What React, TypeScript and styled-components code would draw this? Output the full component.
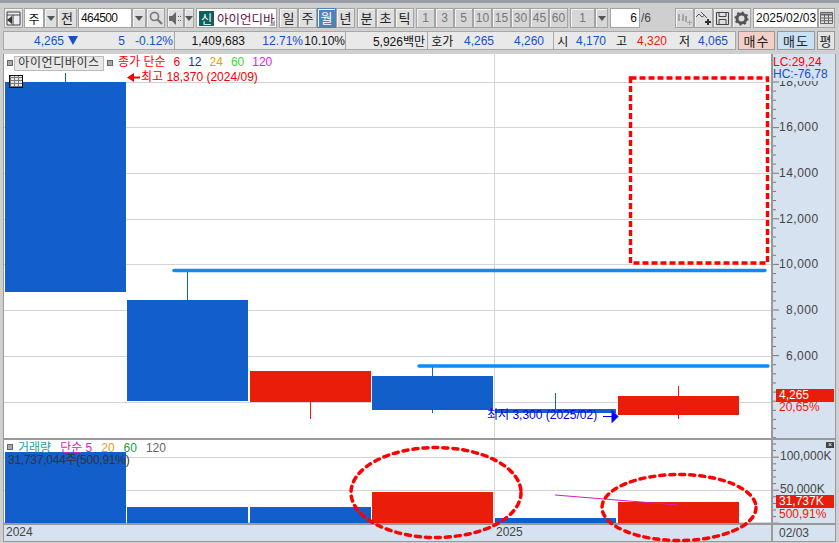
import React from "react";
import styled, { createGlobalStyle } from "styled-components";

const Global = createGlobalStyle`
  html, body { margin: 0; padding: 0; background: #cfcfcf; overflow: hidden; }
  body { font-family: "Liberation Sans", "Noto Sans CJK KR", sans-serif; font-size: 12px; }
  * { box-sizing: border-box; }
`;
const Page = styled.div`
  width: 839px; height: 543px; display: flex; flex-direction: column; background: #cfcfcf;
  border-top: 3px solid #9a9ca3; overflow: hidden;
`;
const Toolbar = styled.div`
  display: flex; align-items: stretch; height: 20px; margin: 5px 0 0 4px;
`;
const Btn = styled.div<{ $w: number; $active?: boolean; $ml?: number; $dim?: boolean }>`
  width: ${(p) => p.$w}px; margin-left: ${(p) => p.$ml ?? 0}px; flex: none;
  display: flex; align-items: center; justify-content: center;
  background: ${(p) => (p.$active ? "#4f81bd" : p.$dim ? "#d6d6d6" : "#dfdfdf")};
  color: ${(p) => (p.$active ? "#fff" : p.$dim ? "#777" : "#222")};
  border: 1px solid ${(p) => (p.$active ? "#4f81bd" : "#a3a3a3")};
  box-shadow: inset 1px 1px 0 #f4f4f4;
  font-size: ${(p) => (p.$dim ? 12 : 13)}px; line-height: 1; white-space: nowrap; overflow: hidden;
`;
const Field = styled.div<{ $w: number; $ml?: number; $align?: string; $tight?: boolean }>`
  width: ${(p) => p.$w}px; margin-left: ${(p) => p.$ml ?? 0}px; flex: none;
  display: flex; align-items: center; justify-content: ${(p) => p.$align ?? "flex-start"};
  background: #fff; border: 1px solid #a3a3a3; padding: 0 2px; color: #111; font-size: 12px;
  letter-spacing: ${(p) => (p.$tight ? "-0.6px" : "0")}; white-space: nowrap;
`;
const NameBox = styled(Field)`
  padding: 0 0 0 2px; position: relative; color: #6b0f3f; font-size: 12.5px; overflow: hidden;
  &::after {
    content: ""; position: absolute; right: 1px; bottom: 1px; width: 0; height: 0;
    border-left: 6px solid transparent; border-bottom: 6px solid #aaa;
  }
`;
const NewTag = styled.span`
  width: 15px; height: 15px; flex: none; background: #0e5f5f; color: #fff; display: flex;
  align-items: center; justify-content: center; font-size: 12px; margin-right: 3px;
`;
const Caret = styled.span`
  width: 0; height: 0; border: 4px solid transparent; border-top: 5px solid #555; border-bottom: 0;
`;
const Plain = styled.span<{ $w: number }>`
  width: ${(p) => p.$w}px; flex: none; display: flex; align-items: center; padding-left: 1px; color: #444; font-size: 12px;
`;
const InfoBar = styled.div`
  display: flex; height: 19px; margin: 3px 0 0 3px; align-items: stretch;
`;
const Segment = styled.div<{ $w: number }>`
  width: ${(p) => p.$w}px; flex: none; display: flex; align-items: center; position: relative;
  background: #e9e9e9; border: 1px solid #a8a8a8; border-left-width: 0; font-size: 12px; white-space: nowrap; overflow: hidden;
  &:first-child { border-left-width: 1px; }
`;
const Val = styled.span<{ $w: number; $c?: string; $end?: boolean }>`
  width: ${(p) => p.$w}px; flex: none; text-align: ${(p) => (p.$end === false ? "left" : "right")};
  color: ${(p) => p.$c ?? "#111"};
`;
const DownMark = styled.svg`
  margin-left: 4px; flex: none;
`;
const Trade = styled.div<{ $w: number; $bg: string; $ml?: number }>`
  width: ${(p) => p.$w}px; margin-left: ${(p) => p.$ml ?? 2}px; flex: none; display: flex; align-items: center; justify-content: center;
  background: ${(p) => p.$bg}; border: 1px solid #999; font-size: 13px; color: #222; letter-spacing: 1px;
`;
const Chart = styled.div`
  margin: 4px 0 0 3px; width: 833px; height: 488px; display: grid;
  grid-template-columns: 767px 64px; grid-template-rows: 386px 85px 16px;
  background: #fff; border: 1px solid #999; border-top: 0;
`;
const Plot = styled.div`
  position: relative; background: #fff; overflow: hidden; border-bottom: 2px solid #999;
  svg { position: absolute; left: 0; top: 0; display: block; }
`;
const VolumePlot = styled(Plot)`
  overflow: visible; z-index: 1;
  svg { overflow: visible; }
`;
const Axis = styled.div`
  position: relative; background: #d6e2f0; border-left: 2px solid #999; border-bottom: 2px solid #999; overflow: hidden;
  svg { position: absolute; left: 0; top: 0; }
`;
const AxisHeader = styled.div`
  position: absolute; left: 0; top: 0; right: 0; height: 27px; background: #d6e2f0;
`;
const TimeRow = styled.div`
  position: relative; background: #d6e2f0; color: #444; font-size: 12px; display: flex; align-items: center;
`;
const TimeAxis = styled(TimeRow)`
  border-left: 2px solid #999; padding-left: 6px;
`;
const At = styled.span<{ $x: number; $y: number; $c?: string; $ls?: number }>`
  position: absolute; left: ${(p) => p.$x}px; top: ${(p) => p.$y}px; color: ${(p) => p.$c ?? "#444"};
  font-size: 12px; line-height: 14px; white-space: nowrap; letter-spacing: ${(p) => p.$ls ?? 0}px;
`;
const Chip = styled.span`
  position: absolute; left: 10px; top: 2px; width: 90px; height: 15px; text-align: center; background: #e8e8e8; border: 1px solid #bbb;
  color: #333; font-size: 12px; line-height: 13px; white-space: nowrap; letter-spacing: .6px;
`;
const Square = styled.span<{ $x: number; $y: number }>`
  position: absolute; left: ${(p) => p.$x}px; top: ${(p) => p.$y}px; width: 6px; height: 6px; background: #aaa; border: 1px solid #666;
`;
const GridIcon = styled.span`
  position: absolute; left: 5px; top: 21px; width: 14px; height: 13px; border: 1px solid #111;
  background:
    repeating-linear-gradient(0deg, #777 0 1px, transparent 1px 3px),
    repeating-linear-gradient(90deg, #777 0 1px, transparent 1px 4px),
    #e8e8e8;
`;
const PriceTag = styled.span<{ $y: number }>`
  position: absolute; left: 3px; right: 1px; top: ${(p) => p.$y}px; height: 13px; background: #ea1c0a; color: #fff;
  font-size: 12px; line-height: 13px; padding-left: 3px;
`;
const Legend = styled.span<{ $c: string; $m?: number }>`
  color: ${(p) => p.$c}; margin-left: ${(p) => p.$m ?? 8}px;
`;
const LegendRow = styled.div<{ $x: number; $y: number }>`
  position: absolute; left: ${(p) => p.$x}px; top: ${(p) => p.$y}px; font-size: 12px; line-height: 14px; white-space: nowrap;
`;
const Close = styled.span`
  position: absolute; left: 53px; top: 2px; width: 8px; height: 6px; background: #444; color: #fff;
  font-size: 7px; line-height: 6px; text-align: center;
`;

const BLUE = "#125fcb";
const RED = "#ea1c0a";
const OX = 4, OY = 54, VY = 440; // chart frame origin, used only to convert drawing coordinates
const candles = [
  { x: 5, t: 82, b: 292, wx: 65, wt: 73, wb: 82, c: BLUE },
  { x: 127, t: 300, b: 401, wx: 187, wt: 270, wb: 300, c: BLUE },
  { x: 250, t: 371, b: 402, wx: 310, wt: 402, wb: 419, c: RED },
  { x: 372, t: 376, b: 410, wx: 432, wt: 365, wb: 413, c: BLUE },
  { x: 495, t: 409, b: 413, wx: 555, wt: 393, wb: 409, c: BLUE },
  { x: 618, t: 396, b: 415, wx: 678, wt: 386, wb: 419, c: RED },
];
const vols = [
  { x: 5, t: 452, c: BLUE }, { x: 127, t: 507, c: BLUE }, { x: 250, t: 507, c: BLUE },
  { x: 372, t: 492, c: RED }, { x: 495, t: 518, c: BLUE }, { x: 618, t: 502, c: RED },
];
const priceLabels: [string, number, number][] = [
  ["18,000", 21, 6], ["16,000", 66, 6], ["14,000", 112, 6], ["12,000", 158, 6],
  ["10,000", 203, 6], ["8,000", 249, 13], ["6,000", 295, 13],
];

export default function App() {
  return (
    <Page>
      <Global />
      <Toolbar>
        <Btn $w={19}>
          <svg width="15" height="15" viewBox="0 0 15 15"><path d="M1 1h13v13H1z" fill="#eee" stroke="#444"/><path d="M1 4h13M7 4v10" stroke="#444" fill="none"/><path d="M6 5L1 9l5 4z" fill="#333"/></svg>
        </Btn>
        <Field $w={20} $ml={1} $align="center">주</Field>
        <Btn $w={13}><Caret /></Btn>
        <Btn $w={20}>전</Btn>
        <Field $w={54} $ml={1} $tight>464500</Field>
        <Btn $w={14}><Caret /></Btn>
        <Btn $w={19}>
          <svg width="14" height="14" viewBox="0 0 14 14" fill="none" stroke="#777" strokeWidth="1.6"><circle cx="5.5" cy="5.5" r="4"/><path d="M8.5 8.5L13 13" strokeWidth="2.2"/></svg>
        </Btn>
        <Btn $w={17} $ml={2}>
          <svg width="13" height="13" viewBox="0 0 13 13"><path d="M0 4h3l4-4v13L3 9H0z" fill="#666"/><path d="M9 4h1v1H9zM9 8h1v1H9zM11 4h1v1h-1zM11 8h1v1h-1z" fill="#666"/></svg>
        </Btn>
        <Btn $w={10}><Caret /></Btn>
        <NameBox $w={81} $ml={2}><NewTag>신</NewTag>아이언디바</NameBox>
        <Btn $w={19} $ml={2}>일</Btn>
        <Btn $w={19}>주</Btn>
        <Btn $w={19} $active>월</Btn>
        <Btn $w={19}>년</Btn>
        <Btn $w={19} $ml={2}>분</Btn>
        <Btn $w={19}>초</Btn>
        <Btn $w={19}>틱</Btn>
        {["1", "3", "5", "10", "15", "30", "45", "60"].map((t, i) => (
          <Btn key={t} $w={19} $ml={i === 0 ? 2 : 0} $dim>{t}</Btn>
        ))}
        <Btn $w={25} $ml={2} $dim>1</Btn>
        <Btn $w={13} $dim><Caret /></Btn>
        <Field $w={30} $ml={2} $align="flex-end">6</Field>
        <Plain $w={35}>/6</Plain>
        <Btn $w={19} $dim>
          <svg width="15" height="15" viewBox="0 0 15 15" fill="#a5a5a5"><path d="M1 3h2v7H1zM5 3h2v7H5zM8 5h2v6H8zM12 9h1v2h2v1h-2v2h-1v-2h-2v-1h2z"/></svg>
        </Btn>
        <Btn $w={19}>
          <svg width="15" height="15" viewBox="0 0 15 15" fill="none" stroke="#555"><path d="M0 6l3-3 3 3 3-2M5 1l6 6"/><path d="M9 11h6M12 8v6" strokeWidth="2" stroke="#333"/></svg>
        </Btn>
        <Btn $w={19}>
          <svg width="15" height="15" viewBox="0 0 15 15" fill="none" stroke="#444"><path d="M1.5 1.5h12v12h-12zM4 1.5v4h7v-4M4 13.5v-5h7v5"/></svg>
        </Btn>
        <Btn $w={19}>
          <svg width="15" height="15" viewBox="0 0 15 15"><circle cx="7.5" cy="7.5" r="4.5" fill="none" stroke="#555" strokeWidth="3"/><circle cx="7.5" cy="7.5" r="6.2" fill="none" stroke="#555" strokeWidth="1.8" strokeDasharray="2 2.8"/></svg>
        </Btn>
        <Field $w={65} $ml={2}>2025/02/03</Field>
        <Btn $w={17}>
          <svg width="13" height="12" viewBox="0 0 13 12" fill="none" stroke="#666"><path d="M.5.5h12v11H.5z"/><path d="M.5 2.5h12" strokeWidth="2"/><path d="M.5 6h12M.5 8.7h12M4.5 3v8M8.5 3v8"/></svg>
        </Btn>
      </Toolbar>
      <InfoBar>
        <Segment $w={172}>
          <Val $w={60} $c="#1450c8">4,265</Val>
          <DownMark width="10" height="9" viewBox="0 0 10 9"><path d="M0 0h10L5 9z" fill="#1450c8"/></DownMark>
          <Val $w={47} $c="#1450c8">5</Val>
          <Val $w={48} $c="#1450c8">-0.12%</Val>
        </Segment>
        <Segment $w={171}>
          <Val $w={70}>1,409,683</Val>
          <Val $w={58} $c="#1450c8">12.71%</Val>
          <Val $w={42}>10.10%</Val>
        </Segment>
        <Segment $w={82}>
          <Val $w={79}>5,926백만</Val>
        </Segment>
        <Segment $w={126}>
          <Val $w={30} $end={false}>&nbsp;호가</Val>
          <Val $w={36} $c="#1450c8">4,265</Val>
          <Val $w={50} $c="#1450c8">4,260</Val>
        </Segment>
        <Segment $w={182}>
          <Val $w={15} $end={false}>&nbsp;시</Val>
          <Val $w={37} $c="#1450c8">4,170</Val>
          <Val $w={21}>고</Val>
          <Val $w={40} $c="#ea1c0a">4,320</Val>
          <Val $w={23}>저</Val>
          <Val $w={38} $c="#1450c8">4,065</Val>
        </Segment>
        <Trade $w={37} $bg="#f4cfc8">매수</Trade>
        <Trade $w={38} $bg="#c9e1f5">매도</Trade>
        <Trade $w={18} $bg="#e4e4e4">평</Trade>
      </InfoBar>
      <Chart>
        <Plot>
          <svg width="767" height="384" viewBox={`${OX} ${OY} 767 384`}>
            {[82, 127, 173, 219, 264, 310, 356, 402].map((y) => (
              <line key={y} x1="4" x2="771" y1={y + 0.5} y2={y + 0.5} stroke="#d4d4d4" />
            ))}
            <line x1="494.5" x2="494.5" y1="54" y2="438" stroke="#d4d4d4" />
            {candles.map((c) => (
              <g key={c.x}>
                <rect x={c.x} y={c.t} width={121} height={c.b - c.t} fill={c.c} />
                <line x1={c.wx + 0.5} x2={c.wx + 0.5} y1={c.wt} y2={c.wb} stroke={c.c} />
              </g>
            ))}
            <line x1="174" x2="765" y1="270.5" y2="270.5" stroke="#0d8bf8" strokeWidth="3.4" strokeLinecap="round" />
            <line x1="419" x2="768" y1="366" y2="366" stroke="#0d8bf8" strokeWidth="3.4" strokeLinecap="round" />
            <rect x="630.5" y="78" width="137" height="185" fill="none" stroke="#f00" strokeWidth="3.4" strokeDasharray="6 3" />
            <path d="M127 77.5l7-4.5v3.5h6v2h-6v3.5z" fill="#e00" />
            <path d="M603 416.5h10M612 410.5l6 6-6 6z" stroke="#0000ff" fill="#0000ff" />
          </svg>
          <Square $x={3} $y={6} />
          <Chip>아이언디바이스</Chip>
          <Square $x={103} $y={6} />
          <LegendRow $x={114} $y={1}>
            <Legend $c="#f00" $m={0}>종가 단순</Legend>
            <Legend $c="#f00">6</Legend>
            <Legend $c="#1030b0">12</Legend>
            <Legend $c="#e8a000">24</Legend>
            <Legend $c="#30e030">60</Legend>
            <Legend $c="#f010f0">120</Legend>
          </LegendRow>
          <At $x={137} $y={16} $c="#e00">최고 18,370 (2024/09)</At>
          <At $x={483} $y={354} $c="#0000e0">최저 3,300 (2025/02)</At>
          <GridIcon />
        </Plot>
        <Axis>
          <svg width="62" height="384" viewBox="0 0 62 384">
            {Array.from({ length: 40 }, (_, i) => 28 + i * 9.12).map((y, i) => (
              <line key={i} x1="0" x2={i % 5 === 0 ? 6 : 3} y1={y} y2={y} stroke="#777" />
            ))}
          </svg>
          {priceLabels.map(([t, y, x]) => (
            <At key={t} $x={x} $y={y} $ls={0.5}>{t}</At>
          ))}
          <AxisHeader>
            <At $x={0} $y={1} $c="#f00">LC:29,24</At>
            <At $x={0} $y={13} $c="#1450c8">HC:-76,78</At>
          </AxisHeader>
          <PriceTag $y={335}>4,265</PriceTag>
          <At $x={6} $y={346} $c="#ea1c0a">20,65%</At>
        </Axis>
        <VolumePlot>
          <svg width="767" height="83" viewBox={`${OX} ${VY} 767 83`}>
            {[457, 490, 522].map((y) => (
              <line key={y} x1="4" x2="771" y1={y + 0.5} y2={y + 0.5} stroke="#d4d4d4" />
            ))}
            <line x1="494.5" x2="494.5" y1="440" y2="523" stroke="#d4d4d4" />
            {vols.map((v) => (
              <rect key={v.x} x={v.x} y={v.t} width={121} height={523 - v.t} fill={v.c} />
            ))}
            <path d="M555 495L678 505" stroke="#d020c0" fill="none" />
            <ellipse cx="436" cy="492.5" rx="85" ry="45" fill="none" stroke="#f00" strokeWidth="3.5" strokeDasharray="5 5" strokeLinecap="round" />
            <ellipse cx="679" cy="507.5" rx="77" ry="33" fill="none" stroke="#f00" strokeWidth="3.5" strokeDasharray="5 5" strokeLinecap="round" />
          </svg>
          <Square $x={3} $y={4} />
          <LegendRow $x={14} $y={1}>
            <Legend $c="#2a9d9d" $m={0}>거래량</Legend>
            <Legend $c="#e020b0" $m={9}>단순 5</Legend>
            <Legend $c="#e8a000" $m={9}>20</Legend>
            <Legend $c="#18a040" $m={9}>60</Legend>
            <Legend $c="#666" $m={9}>120</Legend>
          </LegendRow>
          <At $x={4} $y={13} $c="#333" $ls={-0.25}>31,737,044주(500,91%)</At>
        </VolumePlot>
        <Axis>
          <svg width="62" height="83" viewBox="0 0 62 83">
            {Array.from({ length: 13 }, (_, i) => 4 + i * 6.6).map((y, i) => (
              <line key={i} x1="0" x2={i % 5 === 2 ? 6 : 3} y1={y} y2={y} stroke="#777" />
            ))}
          </svg>
          <Close>×</Close>
          <At $x={7} $y={9}>100,000K</At>
          <At $x={7} $y={42}>50,000K</At>
          <PriceTag $y={55}>31,737K</PriceTag>
          <At $x={6} $y={67} $c="#ea1c0a">500,91%</At>
        </Axis>
        <TimeRow>
          <At $x={2} $y={0}>2024</At>
          <At $x={492} $y={0}>2025</At>
        </TimeRow>
        <TimeAxis>02/03</TimeAxis>
      </Chart>
    </Page>
  );
}
